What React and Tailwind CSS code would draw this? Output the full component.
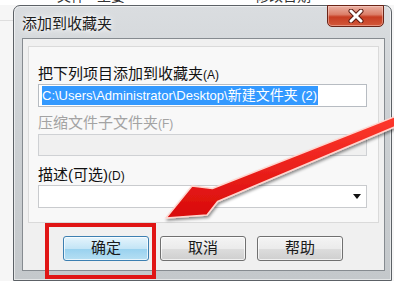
import React from 'react'

const FONT = "[font-family:'Liberation_Sans','Noto_Sans_CJK_SC',sans-serif]"

function CloseButton() {
  return (
    <div className="-mt-px mr-[7px] flex h-[22px] w-[57px] items-center justify-center rounded-b-[5px] border border-[#6a2417] bg-[linear-gradient(180deg,#eab0a2_0%,#dc7f69_42%,#c73d22_55%,#d2583a_100%)] shadow-[inset_0_0_0_1px_rgba(255,220,210,0.45)]">
      <svg width="18" height="14" viewBox="0 0 18 14">
        <path d="M4 2 L14 12 M14 2 L4 12" stroke="#5a1a10" strokeWidth="5" strokeLinecap="round" />
        <path d="M4 2 L14 12 M14 2 L4 12" stroke="#fff" strokeWidth="3" strokeLinecap="round" />
      </svg>
    </div>
  )
}

function Button({ children, primary }) {
  const look = primary
    ? 'border-[#3c7fb1] bg-[linear-gradient(180deg,#e5f4fc_0%,#c4e5f6_50%,#98d1ef_51%,#b6dff3_100%)]'
    : 'border-[#707070] bg-[linear-gradient(180deg,#f4f4f4_0%,#ebebeb_50%,#dddddd_51%,#cfcfcf_100%)]'
  return (
    <div className={`flex h-[25px] w-[86px] items-center justify-center rounded-[3px] border text-[15px] text-[#1a1a1a] shadow-[inset_0_0_0_1px_rgba(255,255,255,0.7)] ${look}`}>
      {children}
    </div>
  )
}

function Arrow() {
  return (
    <svg className="pointer-events-none absolute inset-0" width="394" height="281" viewBox="0 0 394 281">
      <defs>
        <linearGradient id="ar" x1="0" y1="0" x2="0" y2="1">
          <stop offset="0" stopColor="#ff3a2e" />
          <stop offset="1" stopColor="#d80a0a" />
        </linearGradient>
        <filter id="sh" x="-10%" y="-10%" width="130%" height="140%">
          <feDropShadow dx="1" dy="2" stdDeviation="1.5" floodColor="#000" floodOpacity="0.45" />
        </filter>
      </defs>
      <polygon
        points="402,113.8 212.4,188.5 192,186 166,218 207,215 217.6,201.5 406,122.2"
        fill="url(#ar)"
        stroke="#ffd6cf"
        strokeWidth="1.5"
        strokeLinejoin="round"
        filter="url(#sh)"
      />
    </svg>
  )
}

export default function App() {
  return (
    <div className={`relative h-[281px] w-[394px] overflow-hidden bg-[#f6f6f6] ${FONT}`}>
      {/* strip of the window behind */}
      <div className="h-[5px] overflow-hidden bg-white">
        <div className="-mt-[13px] flex text-[14px] leading-[18px] text-[#333]">
          <span className="ml-[57px]">文件</span>
          <span className="ml-[12px]">主要</span>
          <span className="ml-[130px]">修改日期</span>
        </div>
      </div>

      <div className="flex">
        <div className="w-[13px] pt-[15px]">
          <div className="h-px bg-[#dedede]" />
        </div>

        {/* dialog frame */}
        <div className="flex h-[276px] w-[379px] flex-col rounded-t-[7px] border border-[#5c6166] bg-[linear-gradient(180deg,#dadde0_0%,#cdd1d4_40%,#c4c8cb_100%)] shadow-[inset_0_0_0_1px_rgba(255,255,255,0.55)]">
          <div className="flex h-[32px] items-start justify-between">
            <div className="pl-[8px] pt-[9px] text-[15px] leading-[18px] text-[#1c1c1c] [text-shadow:0_0_8px_#fff,0_0_4px_#fff]">
              添加到收藏夹
            </div>
            <CloseButton />
          </div>

          {/* client area */}
          <div className="ml-[8px] mr-[6px] flex h-[233px] flex-col border border-[#868b90] bg-[#f0f0f0] px-[5px] pt-[7px]">
            <div className="flex h-[177px] flex-col border border-[#dadada] bg-[#f8f8f8] pl-[9px] pt-[17px]">
              <div className="h-[20px] text-[15px] leading-[20px] text-[#111]">
                把下列项目添加到收藏夹<span className="text-[12px]">(A)</span>
              </div>
              <div className="flex h-[23px] w-[329px] items-center border border-[#b7bcc2] bg-white pl-[3px]">
                <span className="flex h-[19px] items-center bg-[#3399ff] pr-[1px] text-[13px] leading-[19px] text-white">
                  C:\Users\Administrator\Desktop\<span className="text-[14px]">新建文件夹</span>&nbsp;(2)
                </span>
              </div>

              <div className="mt-[6px] h-[20px] text-[15px] leading-[20px] text-[#a3a3a3]">
                压缩文件子文件夹<span className="text-[12px]">(F)</span>
              </div>
              <div className="mt-px h-[22px] w-[329px] border border-[#cfd1d4] bg-[#f0f0f0]" />

              <div className="mt-[9px] h-[20px] text-[15px] leading-[20px] text-[#111]">
                描述(可选)<span className="text-[12px]">(D)</span>
              </div>
              <div className="flex h-[23px] w-[329px] items-center justify-end border border-[#c9cbce] bg-white pr-[5px]">
                <svg width="8" height="5" viewBox="0 0 8 5">
                  <path d="M0 0 H8 L4 5 Z" fill="#111" />
                </svg>
              </div>
            </div>

            <div className="ml-[35px] mt-[13px] flex gap-[11px]">
              <Button primary>确定</Button>
              <Button>取消</Button>
              <Button>帮助</Button>
            </div>
          </div>
        </div>
      </div>

      {/* annotation overlays */}
      <div className="pointer-events-none absolute left-[45px] top-[223px] h-[56px] w-[111px] border-[4px] border-[#e01515]" />
      <Arrow />
    </div>
  )
}
